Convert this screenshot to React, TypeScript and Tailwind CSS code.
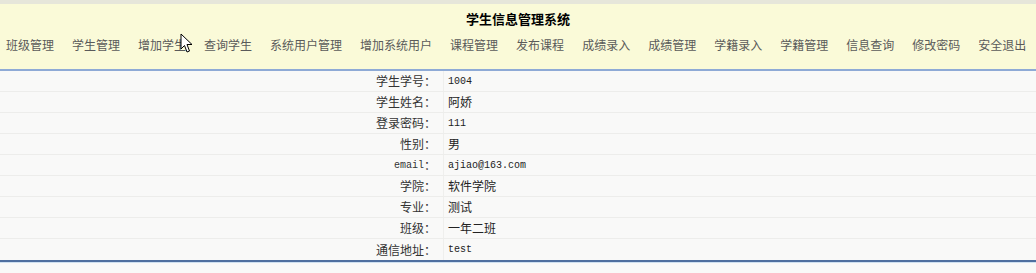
import React from 'react';

const navItems = [
  '班级管理', '学生管理', '增加学生', '查询学生', '系统用户管理', '增加系统用户', '课程管理',
  '发布课程', '成绩录入', '成绩管理', '学籍录入', '学籍管理', '信息查询', '修改密码', '安全退出',
];

const rows = [
  { label: '学生学号：', value: '1004', mono: true },
  { label: '学生姓名：', value: '阿娇' },
  { label: '登录密码：', value: '111', mono: true },
  { label: '性别：', value: '男' },
  { label: 'email：', value: 'ajiao@163.com', mono: true, monoLabel: true },
  { label: '学院：', value: '软件学院' },
  { label: '专业：', value: '测试' },
  { label: '班级：', value: '一年二班' },
  { label: '通信地址：', value: 'test', mono: true },
];

const cjk = { fontFamily: '"Noto Sans CJK SC", "Noto Sans", sans-serif' };
const mono = { fontFamily: '"Liberation Mono", "DejaVu Sans Mono", monospace' };

const App = () => {
  return (
    <div className="relative w-[1036px] h-[273px] bg-[#f9f9f8] overflow-hidden" style={cjk}>
      {/* Header */}
      <div className="h-[4px] bg-[#e6e6da]" />
      <div className="h-[65px] bg-[#fafad8] flex flex-col">
        <div className="h-[24px] flex items-end justify-center text-[13px] font-bold text-black leading-[16px] pb-[1px]">
          学生信息管理系统
        </div>
        <div className="flex gap-[18px] pl-[6px] mt-[9px] text-[12px] leading-[16px] text-[#5a5a5a]">
          {navItems.map((item) => (
            <span key={item} className="whitespace-nowrap">{item}</span>
          ))}
        </div>
      </div>
      <div className="h-[2px] bg-[#8eaad6]" />

      {/* Table */}
      <div className="flex flex-col">
        {rows.map((row, i) => (
          <div key={i} className={`flex h-[21px] ${i < rows.length - 1 ? 'border-b border-[#ededeb]' : ''}`}>
            <div className="w-[444px] pr-[7px] flex items-center justify-end text-[12px] text-[#333] border-r border-[#efefed]">
              {row.monoLabel ? (
                <>
                  <span className="text-[10px]" style={mono}>email</span>
                  <span>：</span>
                </>
              ) : (
                row.label
              )}
            </div>
            <div className="pl-[4px] flex items-center text-[12px] text-[#222]">
              {row.mono ? <span className="text-[10px]" style={mono}>{row.value}</span> : row.value}
            </div>
          </div>
        ))}
      </div>
      <div className="h-[2px] bg-[#4f6f9f]" />
      <div className="h-[1px] bg-[#cfe0f0]" />

      {/* Mouse cursor */}
      <svg className="absolute left-[180px] top-[33px]" width="14" height="21" viewBox="0 0 14 21">
        <path d="M1 1 L1 16 L4.5 12.5 L7 19 L9.5 18 L7 11.5 L12 11.5 Z" fill="#fff" stroke="#000" strokeWidth="1" strokeLinejoin="miter" />
      </svg>
    </div>
  );
};

export default App;
